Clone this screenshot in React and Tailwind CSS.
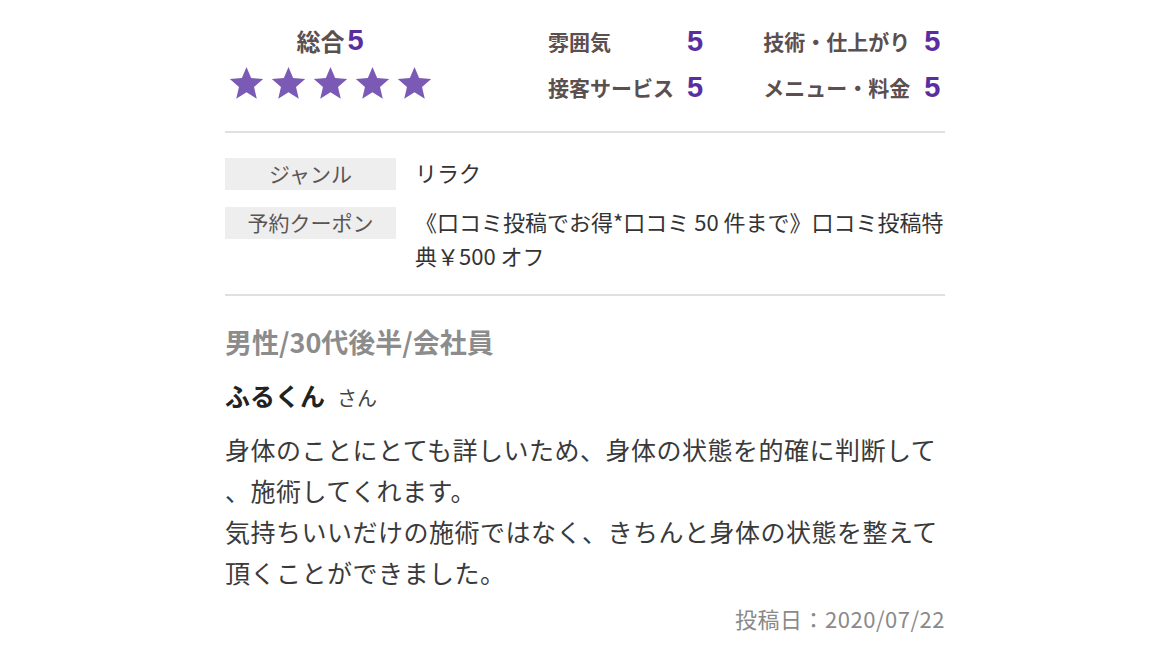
const jp = { fontFamily: '"Noto Sans CJK JP", "Noto Sans", sans-serif' };

function Star() {
  return (
    <svg width="37" height="35" viewBox="0 0 24 23" className="shrink-0">
      <path
        d="M12 0.6l3.05 7.3 7.9 0.65-6 5.2 1.8 7.7L12 17.3l-6.75 4.15 1.8-7.7-6-5.2 7.9-0.65z"
        fill="#7b5ab5"
      />
    </svg>
  );
}

function Score({ label, value, labelWidth }) {
  return (
    <div className="flex items-center h-[46px]">
      <span className="text-[21px] font-bold text-[#5b4f4f] leading-none" style={{ width: labelWidth }}>
        {label}
      </span>
      <span className="text-[29px] font-bold text-[#5b2ea0] leading-none font-['Liberation_Sans',sans-serif]">
        {value}
      </span>
    </div>
  );
}

function InfoRow({ label, children }) {
  return (
    <div className="flex items-start">
      <div className="w-[171px] h-[32px] mt-[1px] bg-[#eeeeee] flex items-center justify-center text-[21px] text-[#5a5555] shrink-0">
        {label}
      </div>
      <div className="ml-[19px] flex-1 -mt-[2px] text-[22px] leading-[34px] text-[#333]">{children}</div>
    </div>
  );
}

export default function App() {
  return (
    <div className="min-h-[650px] bg-white" style={jp}>
      <div className="w-[720px] mx-auto">
        <div className="flex pt-[18px] pb-[21px]">
          <div className="w-[210px] flex flex-col items-center">
            <div className="h-[46px] flex items-center gap-[3px]">
              <span className="text-[24px] font-bold text-[#5b4f4f]">総合</span>
              <span className="text-[29px] font-bold text-[#5b2ea0] font-['Liberation_Sans',sans-serif]">5</span>
            </div>
            <div className="flex gap-[5px] mt-[2px]">
              <Star />
              <Star />
              <Star />
              <Star />
              <Star />
            </div>
          </div>
          <div className="ml-[113px] flex gap-[60px]">
            <div>
              <Score label="雰囲気" value="5" labelWidth={139} />
              <Score label="接客サービス" value="5" labelWidth={139} />
            </div>
            <div>
              <Score label="技術・仕上がり" value="5" labelWidth={161} />
              <Score label="メニュー・料金" value="5" labelWidth={161} />
            </div>
          </div>
        </div>
        <div className="h-[2px] bg-[#e0e0e0]" />

        <div className="pt-[24px] pb-[22px] flex flex-col gap-[16px]">
          <InfoRow label="ジャンル">リラク</InfoRow>
          <InfoRow label="予約クーポン">《口コミ投稿でお得*口コミ 50 件まで》口コミ投稿特典￥500 オフ</InfoRow>
        </div>
        <div className="h-[2px] bg-[#e0e0e0]" />

        <div className="mt-[28px] text-[27px] font-bold leading-[36px] text-[#8c8c8c]">男性/30代後半/会社員</div>
        <div className="mt-[17px] leading-[36px] flex items-baseline">
          <span className="text-[25px] font-bold text-[#222]">ふるくん</span>
          <span className="ml-[12px] text-[20px] text-[#444]">さん</span>
        </div>
        <div className="mt-[13px] text-[25px] leading-[41px] text-[#3a3a3a] tracking-[0.5px] [line-break:anywhere]">
          <p>身体のことにとても詳しいため、身体の状態を的確に判断して、施術してくれます。</p>
          <p>気持ちいいだけの施術ではなく、きちんと身体の状態を整えて頂くことができました。</p>
        </div>
        <div className="mt-[10px] text-right text-[22px] leading-[30px] tracking-[0.5px] text-[#8a8a8a]">投稿日：2020/07/22</div>
      </div>
    </div>
  );
}
